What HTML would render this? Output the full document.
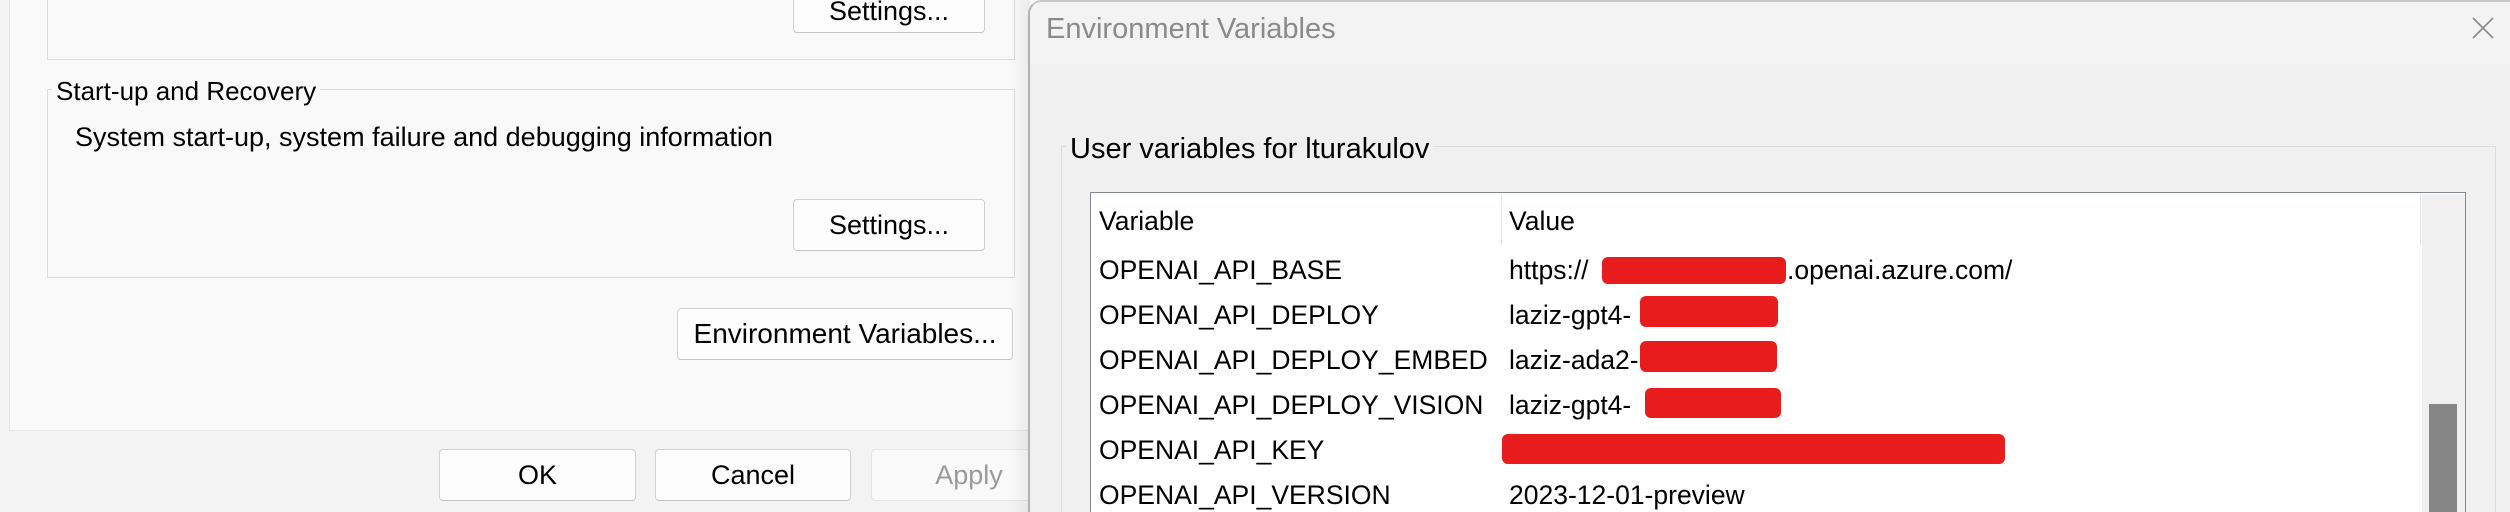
<!DOCTYPE html>
<html style="overflow:hidden;width:2510px;height:512px"><head><meta charset="utf-8"><style>
*{margin:0;padding:0;box-sizing:border-box}
body{width:2510px;height:512px;overflow:hidden;background:#f3f3f3;position:relative;font-family:"Segoe UI","Liberation Sans",sans-serif;color:#000}
.a{position:absolute}
.btn{position:absolute;background:#fdfdfd;border:1.5px solid #d0d0d0;border-bottom-color:#c4c4c4;border-radius:4px;font-size:27px;display:flex;align-items:center;justify-content:center}
.gb{position:absolute;border:1.5px solid #dcdcdc}
.t{position:absolute;white-space:nowrap;line-height:1}
.red{position:absolute;background:#e81c1c;border-radius:6px}
.row{position:absolute;font-size:26.5px;white-space:nowrap;line-height:1}
</style></head><body>
<div class="a" style="left:9px;top:0;width:1030px;height:431px;background:#f9f9f9;border-right:1px solid #e5e5e5;border-bottom:1.5px solid #e5e5e5;border-left:1px solid #e5e5e5"></div>
<div class="gb" style="left:47px;top:-5px;width:968px;height:65px"></div>
<div class="btn" style="left:793px;top:-10px;width:192px;height:43px">Settings...</div>
<div class="gb" style="left:47px;top:89px;width:968px;height:189px"></div>
<div class="t" style="left:52px;top:78px;font-size:26px;background:#f9f9f9;padding:0 4px">Start-up and Recovery</div>
<div class="t" style="left:75px;top:124px;font-size:27px">System start-up, system failure and debugging information</div>
<div class="btn" style="left:793px;top:199px;width:192px;height:52px">Settings...</div>
<div class="btn" style="left:677px;top:308px;width:336px;height:52px;font-size:28px">Environment Variables...</div>
<div class="btn" style="left:439px;top:449px;width:197px;height:52px">OK</div>
<div class="btn" style="left:655px;top:449px;width:196px;height:52px">Cancel</div>
<div class="btn" style="left:871px;top:449px;width:196px;height:52px;color:#9a9a9a;background:#f9f9f9;border-color:#e5e5e5">Apply</div>
<div class="a" style="left:1010px;top:0;width:20px;height:512px;background:linear-gradient(90deg,rgba(0,0,0,0),rgba(0,0,0,0.06))"></div>
<div class="a" style="left:1028px;top:0;width:1482px;height:512px;background:#f0f0f0;border-left:2px solid #b0b0b0;border-top:2px solid #c8c8c8;border-top-left-radius:14px;overflow:hidden">
<div class="a" style="left:0;top:0;width:100%;height:62px;background:#f3f3f3"></div>
</div>
<div class="t" style="left:1046px;top:15px;font-size:29px;color:#8a8a8a">Environment Variables</div>
<svg class="a" style="left:2472px;top:17px" width="22" height="22"><path d="M1 1L21 21M21 1L1 21" stroke="#8a8a8a" stroke-width="1.6"/></svg>
<div class="gb" style="left:1061px;top:146px;width:1435px;height:380px;border-bottom:none"></div>
<div class="t" style="left:1066px;top:135px;font-size:29px;background:#f0f0f0;padding:0 4px">User variables for lturakulov</div>
<div class="a" style="left:1090px;top:192px;width:1376px;height:330px;background:#fff;border:1.5px solid #828790;border-bottom:none"></div>
<div class="a" style="left:2422px;top:194px;width:43px;height:320px;background:#f0f0f0"></div>
<div class="a" style="left:2420px;top:194px;width:1px;height:51px;background:#e5e5e5"></div>
<div class="a" style="left:1501px;top:194px;width:1px;height:51px;background:#e5e5e5"></div>
<div class="a" style="left:2429px;top:404px;width:28px;height:110px;background:#868686"></div>
<div class="row" style="left:1099px;top:208px">Variable</div>
<div class="row" style="left:1509px;top:208px">Value</div>
<div class="row" style="left:1099px;top:257px">OPENAI_API_BASE</div>
<div class="row" style="left:1509px;top:257px">https://</div>
<div class="row" style="left:1787px;top:257px">.openai.azure.com/</div>
<div class="row" style="left:1099px;top:302px">OPENAI_API_DEPLOY</div>
<div class="row" style="left:1509px;top:302px">laziz-gpt4-</div>
<div class="row" style="left:1099px;top:347px">OPENAI_API_DEPLOY_EMBED</div>
<div class="row" style="left:1509px;top:347px">laziz-ada2-</div>
<div class="row" style="left:1099px;top:392px">OPENAI_API_DEPLOY_VISION</div>
<div class="row" style="left:1509px;top:392px">laziz-gpt4-</div>
<div class="row" style="left:1099px;top:437px">OPENAI_API_KEY</div>
<div class="row" style="left:1099px;top:482px">OPENAI_API_VERSION</div>
<div class="row" style="left:1509px;top:482px">2023-12-01-preview</div>
<div class="red" style="left:1602px;top:257px;width:184px;height:27px"></div>
<div class="red" style="left:1640px;top:296px;width:138px;height:31px"></div>
<div class="red" style="left:1640px;top:341px;width:137px;height:31px"></div>
<div class="red" style="left:1645px;top:388px;width:136px;height:30px"></div>
<div class="red" style="left:1502px;top:434px;width:503px;height:30px"></div>
</body></html>
